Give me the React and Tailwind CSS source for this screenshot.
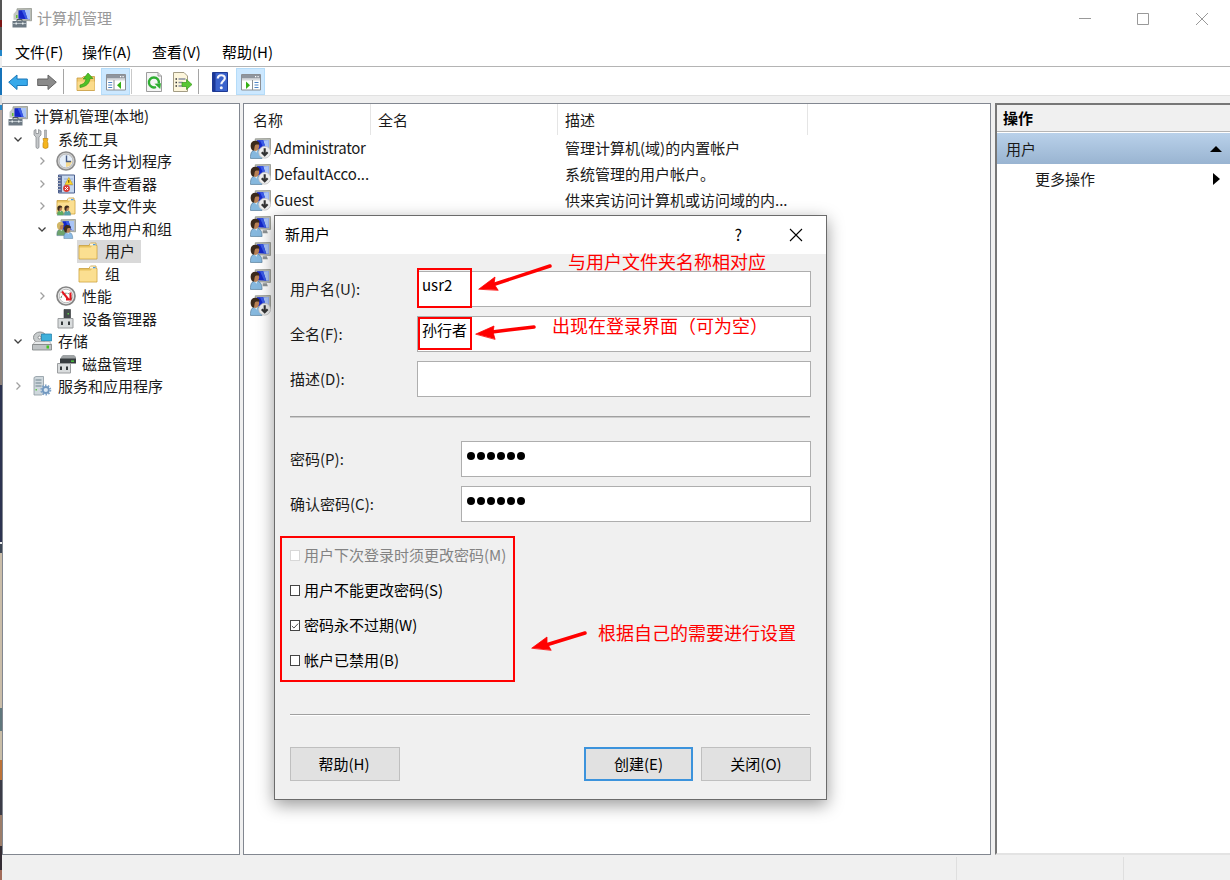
import React from 'react';
import clsx from 'clsx';

const Monitor = () => (
    <>
        <path d="M5 .8 19.500.5v12.300L5 12z" fill="#b9bdb6" stroke="#92958e" strokeWidth=".8" />
        <path d="M6.500 2.200 18 2v9.300L6.500 10.800z" fill="#1527c8" />
        <path d="M12.500 2.100 18 2v9.300l-2.500-.1z" fill="#a9c4f7" />
        <path d="m9.500 2.100 3 0 3 9-2-.1z" fill="#3a5be6" />
    </>
);

const Person = ({ hair = '#3b2a1c', shirt = '#86b8de' }) => (
    <>
        <path d="M.5 19.500c-.3-5 1-8 5-8 4.200 0 6 2.500 6 8z" fill={shirt} stroke="#4c7391" strokeWidth=".6" />
        <path d="M4 11h3.500L6 14z" fill="#e8eef2" />
        <ellipse cx="5.200" cy="7.800" rx="3.500" ry="4.500" fill="#b98155" />
        <path d="M.8 9C0 4.500 2 2.500 5 2.500s4.500 2 4 4C6.500 5.800 5 6.300 4.500 7.500L3.800 12C2 12 1.200 10.500.8 9z" fill={hair} />
    </>
);

const Folder = () => (
    <>
        <path d="M1 4.500h10l1.500-2.500H18v2l1 .5V18H1z" fill="#e8c35f" stroke="#c99f3d" strokeWidth=".8" />
        <path d="M12 2.500h5.500v2H12z" fill="#f8f4e6" />
        <path d="M15 3h2.500v1.200H15z" fill="#4c9be0" />
        <path d="M1.500 6.500h11L14 5h4.500v12.500h-17z" fill="#fbdf91" />
    </>
);

const Panes = ({ flip }) => (
    <>
        <path d="M.5 2.500h19V18H.5z" fill="#fff" stroke="#8c8f94" />
        <path d="M1 3h18v3.500H1z" fill="#8f959e" />
        <path d="M14 4h1.200v1.200H14zM16.500 4h1.200v1.200h-1.200z" fill="#fff" />
        <path d="M1 7h18v1.500H1z" fill="#d6d9dd" />
        {flip ? (
            <>
                <path d="M11.500 8v10" stroke="#8c8f94" />
                <path d="m5 9.500 4 3.700L5 17z" fill="#35b015" />
                <path d="M13.500 10.500h4M13.500 13h4M13.500 15.500h4" stroke="#4f83c4" strokeWidth="1.200" />
            </>
        ) : (
            <>
                <path d="M8 8v10" stroke="#8c8f94" />
                <path d="m15 9.500-4 3.700 4 3.800z" fill="#35b015" />
                <path d="M2.200 10.500h4M2.200 13h4M2.200 15.500h4" stroke="#4f83c4" strokeWidth="1.200" />
            </>
        )}
    </>
);

const icons = {
    computer: (
        <>
            <Monitor />
            <path d="m1.500 6 3-3.500 1.500.3v9H1.500z" fill="#c3c7c3" />
            <path d="M4 7h1.500v3H4z" fill="#64bd35" />
            <path d="M.5 13h14v6.500H.5z" fill="#6d7983" />
            <path d="M5 13v-1.500h5V13" stroke="#4b565e" fill="none" />
            <path d="M.5 15.500h14" stroke="#b6c0c6" />
            <path d="M3.500 14.500h1.500v2H3.500zM10 14.500h1.500v2H10z" fill="#e8edef" />
        </>
    ),
    back: (
        <path d="M.7 10.200 9 3v4h10.300v6.500H9v4z" fill="#37a9ea" stroke="#1b77b8" strokeLinejoin="round" />
    ),
    forward: (
        <path d="M19.300 10.200 11 3v4H.7v6.500H11v4z" fill="#8b8b8b" stroke="#646464" strokeLinejoin="round" />
    ),
    up: (
        <>
            <path d="M1 6h5l1.500-1.500H18.500V18.500H1z" fill="#f3cc72" stroke="#c79b3d" strokeWidth=".8" />
            <path d="M1.500 9.500h17V18h-17z" fill="#fbdb8b" />
            <path d="M4 13c4-1 5.500-3 6-6H7.200L12 1l5 5.500h-3c-.5 4.500-3 8-10 9z" fill="#4fc127" stroke="#2d8d14" strokeWidth=".6" />
        </>
    ),
    tree: <Panes />,
    actions: <Panes flip />,
    refresh: (
        <>
            <path d="M2.500.5h11.500L17.500 4v15.500h-15z" fill="#f4f4f4" stroke="#9d9d9d" />
            <path d="M14 .5V4h3.500" fill="#ddd" stroke="#9d9d9d" />
            <path d="M12 15a5 5 0 1 1 2.800-3.500" fill="none" stroke="#2fae32" strokeWidth="2.400" />
            <path d="m10.500 11.800 6.500-.5-.8 5.700z" fill="#2fae32" />
        </>
    ),
    exportList: (
        <>
            <path d="M1.500.5H12L15.500 4v15.500h-14z" fill="#fdf6dc" stroke="#a39c84" />
            <path d="M3.500 7h1.500M3.500 10.500h1.500M3.500 14h1.500" stroke="#333" strokeWidth="1.500" />
            <path d="M6.500 7h7M6.500 10.500h4M6.500 14h4" stroke="#888fa0" strokeWidth="1.300" />
            <path d="M10 10.500h4.500v-3L20 12.500l-5.500 5v-3H10z" fill="#58c832" stroke="#36971b" strokeWidth=".7" />
        </>
    ),
    help: (
        <>
            <path d="M2.500.5h15v19h-15z" fill="#3a62cc" stroke="#1d3994" />
            <path d="M3 1h2.500v18H3z" fill="#1b3796" />
            <path d="M7.800 6.500c0-4.300 7-4.300 7-.3 0 2.800-3.500 2.800-3.500 6" fill="none" stroke="#f4f4fa" strokeWidth="2.200" />
            <circle cx="11.300" cy="15.700" r="1.500" fill="#f4f4fa" />
        </>
    ),
    tools: (
        <>
            <path d="M4 8 2 6V1.500L4 .5v4h2.500v-4L9 2v4L7 8v10.500q-1.500 2-3 0z" fill="#c5c8ca" stroke="#7e8386" strokeWidth=".7" />
            <path d="M12.500 1h2v9h-2z" fill="#b7b9bb" stroke="#808487" strokeWidth=".5" />
            <path d="M11 9.500h5l-.7 3 .7 2v4q-2.500 2-5 0v-4l.7-2z" fill="#f5b51e" stroke="#c28713" strokeWidth=".7" />
        </>
    ),
    clock: (
        <>
            <circle cx="10" cy="10" r="9" fill="#d9d9d9" stroke="#8c8c8c" strokeWidth="1.600" />
            <circle cx="10" cy="10" r="7" fill="#e6eff9" stroke="#b5b5b5" />
            <path d="M10 10h6a6 6 0 0 1-6 6z" fill="#f4d88f" />
            <path d="M10.500 4.500V10.500H15" fill="none" stroke="#455a85" strokeWidth="1.400" />
        </>
    ),
    events: (
        <>
            <path d="M2.500 1h16v18h-16z" fill="#c7d8ef" stroke="#4b5e8c" />
            <path d="M3 1.500h3v17H3z" fill="#5b6b96" />
            <path d="M1.500 3.500h3M1.500 6.500h3M1.500 9.500h3M1.500 12.500h3M1.500 15.500h3" stroke="#b8bdc8" />
            <path d="M8 5h9M8 8h9M8 11h9" stroke="#8ea7d4" strokeWidth=".8" />
            <path d="m12.800 3.500 4 7H9z" fill="#ffd72b" stroke="#c59a15" strokeWidth=".6" />
            <path d="M12.800 6v2.800" stroke="#4c3b00" />
            <circle cx="10.500" cy="14.500" r="3.400" fill="#db3b34" />
            <path d="m9 13 3 3m0-3-3 3" stroke="#fff" />
        </>
    ),
    shared: (
        <>
            <Folder />
            <g transform="translate(1 8) scale(.58)"><Person shirt="#5fae5c" /></g>
            <g transform="translate(8 8) scale(.58)"><Person shirt="#55a3a6" /></g>
        </>
    ),
    users: (
        <>
            <Monitor />
            <g transform="translate(.5 1) scale(.8)"><Person hair="#d2b767" shirt="#6ea46c" /></g>
            <g transform="translate(7.500 4) scale(.8)"><Person shirt="#8dbce6" /></g>
        </>
    ),
    folder: <Folder />,
    perf: (
        <>
            <circle cx="10" cy="10" r="9" fill="#eee" stroke="#858585" strokeWidth="1.700" />
            <circle cx="10" cy="10" r="6.800" fill="#fff" stroke="#bcbcbc" />
            <path d="M5 12a5.500 5.500 0 0 1 10.500-1.500V14" fill="none" stroke="#59846b" strokeDasharray="2 1" />
            <path d="m6 5.500 6.500 8M14.500 6.500V13.500H10" fill="none" stroke="#e11820" strokeWidth="2" />
        </>
    ),
    device: (
        <>
            <path d="M8 .5h6.500V11H8z" fill="#454a4d" stroke="#2d3032" strokeWidth=".6" />
            <path d="M11.500 4h1.500v1.500h-1.500z" fill="#5ec94b" />
            <path d="M2 9.500h15v9.500H2z" fill="#d9dcdd" stroke="#9a9d9f" />
            <path d="M5 12.500h2v3.500H5zM12 12.500h2v3.500h-2z" fill="#33373a" />
        </>
    ),
    storage: (
        <>
            <ellipse cx="8" cy="6.500" rx="6.500" ry="5.500" fill="#c8cccd" stroke="#8a8e90" />
            <circle cx="7.500" cy="6.500" r="1.500" fill="#fff" stroke="#8a8e90" />
            <path d="M9.500 3h10v7h-10z" fill="#3fb0da" stroke="#1d7da9" strokeWidth=".7" />
            <path d="m3 10.500-2 3h18.500l-2-3z" fill="#e8eaeb" stroke="#999" strokeWidth=".6" />
            <path d="M.5 13.500h19v5.500H.5z" fill="#bfc3c5" stroke="#7b8082" strokeWidth=".8" />
            <path d="M14.500 14.500h2.500v3h-2.500z" fill="#43c51f" />
        </>
    ),
    disk: (
        <>
            <path d="m5 3 2-2h11l2 2v5H4z" fill="#9fa3a5" />
            <path d="M4 4.500h16v5H4z" fill="#373c3f" />
            <path d="M15 6.500h3v1.300h-3z" fill="#4bd73a" />
            <path d="M1.500 9.500h13v9.500h-13z" fill="#d9dcdd" stroke="#9a9d9f" />
            <path d="M4 12.500h2v3.500H4zM10 12.500h2v3.500h-2z" fill="#33373a" />
        </>
    ),
    services: (
        <>
            <path d="M2 1.500 4 .5h7.500v17L9.500 19H2z" fill="#cfd8dd" stroke="#8b989f" strokeWidth=".8" />
            <path d="M3.500 4h6M3.500 7h6M3.500 10h6" stroke="#71848f" strokeWidth="1.200" />
            <path d="M3.500 13h1.500v1.500H3.500z" fill="#5fc648" />
            <circle cx="13.800" cy="14" r="4.600" fill="none" stroke="#7fa3c8" strokeWidth="1.800" strokeDasharray="1.600 1.290" />
            <circle cx="13.800" cy="14" r="3" fill="#dae8f4" stroke="#7298c0" strokeWidth="1.800" />
        </>
    ),
    user: (
        <>
            <Monitor />
            <path d="M12 13.500h4l1 3h-5z" fill="#8e9395" />
            <Person />
        </>
    ),
    userOff: (
        <>
            <Monitor />
            <Person />
            <circle cx="14" cy="13.500" r="5.700" fill="#ededed" stroke="#bdbdbd" strokeWidth=".7" />
            <path d="M14 9.800v6.500M11.200 13.500l2.800 3 2.800-3" fill="none" stroke="#333" strokeWidth="2" />
        </>
    ),
};

const Icon = ({ name, className }) => (
    <svg viewBox="0 0 20 20" className={clsx('h-5 w-5 shrink-0', className)}>{icons[name]}</svg>
);

const menus = [
    { label: '文件(F)', width: 'w-[67px]' },
    { label: '操作(A)', width: 'w-[70px]' },
    { label: '查看(V)', width: 'w-[70px]' },
    { label: '帮助(H)', width: 'w-[70px]' },
];

const tree = [
    { label: '系统工具', icon: 'tools', indent: 'pl-[8px]', arrow: 'open' },
    { label: '任务计划程序', icon: 'clock', indent: 'pl-[32px]', arrow: 'closed' },
    { label: '事件查看器', icon: 'events', indent: 'pl-[32px]', arrow: 'closed' },
    { label: '共享文件夹', icon: 'shared', indent: 'pl-[32px]', arrow: 'closed' },
    { label: '本地用户和组', icon: 'users', indent: 'pl-[32px]', arrow: 'open' },
    { label: '用户', icon: 'folder', indent: 'pl-[57px]', selected: true },
    { label: '组', icon: 'folder', indent: 'pl-[57px]' },
    { label: '性能', icon: 'perf', indent: 'pl-[32px]', arrow: 'closed' },
    { label: '设备管理器', icon: 'device', indent: 'pl-[32px]' },
    { label: '存储', icon: 'storage', indent: 'pl-[8px]', arrow: 'open' },
    { label: '磁盘管理', icon: 'disk', indent: 'pl-[32px]' },
    { label: '服务和应用程序', icon: 'services', indent: 'pl-[8px]', arrow: 'closed' },
];

const accounts = [
    { name: 'Administrator', desc: '管理计算机(域)的内置帐户', icon: 'userOff' },
    { name: 'DefaultAcco...', desc: '系统管理的用户帐户。', icon: 'userOff' },
    { name: 'Guest', desc: '供来宾访问计算机或访问域的内...', icon: 'userOff' },
    { name: '', desc: '', icon: 'user' },
    { name: '', desc: '', icon: 'user' },
    { name: '', desc: '', icon: 'user' },
    { name: '', desc: '', icon: 'userOff' },
];

const checks = [
    { label: '用户下次登录时须更改密码(M)', disabled: true },
    { label: '用户不能更改密码(S)' },
    { label: '密码永不过期(W)', checked: true },
    { label: '帐户已禁用(B)' },
];

const Separator = () => <div className="w-px self-stretch bg-[#a5a5a5]" />;

const TitleBar = () => (
    <header className="flex h-9 items-center pl-[10px]">
        <Icon name="computer" />
        <span className="ml-[5px] text-[#999]">计算机管理</span>
        <svg className="ml-auto h-9 w-[174px]" viewBox="0 0 174 36" fill="none" stroke="#999">
            <path d="M23 18.500h12" />
            <path d="M81.500 13.500h11v11h-11z" />
            <path d="m140 13 12 12m0-12-12 12" />
        </svg>
    </header>
);

const Toolbar = () => (
    <div className="flex h-[30px] items-center border-t border-b border-t-[#b4b4b4] border-b-[#e1e1e1] pt-px pl-[6px]">
        <Icon name="back" />
        <Icon name="forward" className="ml-[9px]" />
        <div className="ml-[6px] flex h-[25px]"><Separator /></div>
        <Icon name="up" className="ml-[12px] h-[20px]" />
        <div className="ml-[5px] flex h-[27px] w-[29px] items-center justify-center border border-[#b5dcf9] bg-[#cce8ff]">
            <Icon name="tree" />
        </div>
        <div className="ml-px flex h-[25px] opacity-60"><Separator /></div>
        <Icon name="refresh" className="ml-[12px]" />
        <Icon name="exportList" className="ml-2" />
        <div className="ml-[6px] flex h-[25px]"><Separator /></div>
        <Icon name="help" className="ml-[11px]" />
        <div className="ml-[6px] flex h-[27px] w-[29px] items-center justify-center border border-[#b5dcf9] bg-[#cce8ff]">
            <Icon name="actions" />
        </div>
    </div>
);

const Arrow = ({ state }) => (
    <svg viewBox="0 0 14 14" className="h-[14px] w-[14px] shrink-0" fill="none" strokeWidth="1.300">
        {state === 'open' && <path d="m3.500 5.500 3.500 3.500 3.500-3.500" stroke="#404040" />}
        {state === 'closed' && <path d="m5.500 3.500 3.500 3.500-3.500 3.500" stroke="#a0a0a0" />}
    </svg>
);

const Tree = () => (
    <nav className="w-[238px] border border-[#828790] bg-white pt-px">
        <div className="flex h-[22.500px] items-center pl-[5px]">
            <Icon name="computer" />
            <span className="ml-[6px]">计算机管理(本地)</span>
        </div>
        {tree.map((node) => (
            <div key={node.label} className={clsx('flex h-[22.500px] items-center', node.indent)}>
                <Arrow state={node.arrow} />
                <div
                    className={clsx(
                        'flex h-[22.500px] items-center',
                        node.selected && 'ml-[3px] bg-[#d9d9d9] pr-[6px]',
                        node.label === '组' && 'ml-[3px]'
                    )}
                >
                    <Icon name={node.icon} className={node.icon === 'folder' ? 'ml-px' : 'ml-[7px]'} />
                    <span className={node.icon === 'folder' ? 'ml-[7px]' : 'ml-[6px]'}>{node.label}</span>
                </div>
            </div>
        ))}
    </nav>
);

const UserList = () => (
    <main className="ml-[3px] w-[748px] border border-[#828790] bg-white">
        <div className="flex h-[31px]">
            <div className="w-[127px] border-r border-[#e5e5e5] pt-[5px] pl-[9px]">名称</div>
            <div className="w-[187px] border-r border-[#e5e5e5] pt-[5px] pl-[7px]">全名</div>
            <div className="w-[250px] border-r border-[#e5e5e5] pt-[5px] pl-[7px]">描述</div>
        </div>
        {accounts.map((account, i) => (
            <div key={i} className="flex h-[26.200px] items-center pl-[6px]">
                <Icon name={account.icon} className="h-[21px] w-[21px]" />
                <span className={clsx('ml-[3px] w-[291px]', account.name === 'Administrator' ? 'tracking-[-0.35px]' : 'tracking-[-0.05px]')}>
                    {account.name}
                </span>
                <span>{account.desc}</span>
            </div>
        ))}
    </main>
);

const ActionsPane = () => (
    <aside className="ml-[4px] flex-1 border-t-2 border-b-2 border-l-2 border-t-[#777] border-b-[#e3e3e3] border-l-[#777] bg-white">
        <div className="flex h-[27px] items-center border-b border-[#b5b5b5] bg-[#f0f0f0] pl-[6px] font-bold text-black">操作</div>
        <div className="mt-px flex h-[31px] items-center justify-between bg-linear-to-b from-[#b9d1ea] to-[#99b4d1] pr-[8px] pl-[9px]">
            <span>用户</span>
            <svg viewBox="0 0 12 6" className="h-[6px] w-3"><path d="M6 0 12 6H0z" /></svg>
        </div>
        <div className="flex h-[30px] items-center justify-between pr-[10px] pl-[38px]">
            <span>更多操作</span>
            <svg viewBox="0 0 7 12" className="h-3 w-[7px]"><path d="M0 0 7 6 0 12z" /></svg>
        </div>
    </aside>
);

const Field = ({ label, value, secret }) => (
    <div className="flex h-9">
        <label className={clsx('pt-[7px]', secret ? 'w-[171px]' : 'w-[127px]')}>{label}</label>
        <div className={clsx('flex-1 border border-[#aeaeae] bg-white text-black', secret ? 'px-[5px]' : 'pt-[2px] pl-[4px]')}>
            {secret ? (
                <div className="flex gap-[2px] pt-[10px]">
                    {[...Array(6)].map((_, i) => (
                        <span key={i} className="h-2 w-2 rounded-full bg-black" />
                    ))}
                </div>
            ) : value}
        </div>
    </div>
);

const NewUserDialog = () => (
    <section className="absolute top-[215px] left-[274px] flex h-[585px] w-[553px] flex-col border border-[#6b6b6b] bg-[#f0f0f0] shadow-[0_5px_16px_rgba(0,0,0,0.4)]">
        <div className="flex h-[38px] items-center bg-white pr-[23px] pl-[10px] text-black">
            <span className="pb-[2px]">新用户</span>
            <span className="ml-auto mr-[47px] pb-[2px] text-base">?</span>
            <svg viewBox="0 0 14 14" className="h-[14px] w-[14px]" stroke="#000" strokeWidth="1.100"><path d="m1 1 12 12M13 1 1 13" /></svg>
        </div>
        <div className="flex flex-1 flex-col pt-[17px] pr-[15px] pl-[15px]">
            <div className="flex flex-col gap-[9px]">
                <Field label="用户名(U):" value="usr2" />
                <Field label="全名(F):" value="孙行者" />
                <Field label="描述(D):" value="" />
            </div>
            <div className="mt-[19px] mr-px h-[2px] border-t border-b border-t-[#a0a0a0] border-b-[#ccc]" />
            <div className="mt-[23px] flex flex-col gap-[9px]">
                <Field label="密码(P):" secret />
                <Field label="确认密码(C):" secret />
            </div>
            <div className="mt-[16px]">
                {checks.map((item) => (
                    <div key={item.label} className={clsx('flex h-[35px] items-center', item.disabled ? 'text-[#838383]' : 'text-black')}>
                        <span className={clsx('flex h-[11px] w-[10px] items-center justify-center border bg-white', item.disabled ? 'border-[#d8d8d8]' : 'border-[#444]')}>
                            {item.checked && (
                                <svg viewBox="0 0 9 9" className="h-[8px] w-[8px]" fill="none" stroke="#333"><path d="m1 4.500 2.300 2.300L8 1.800" /></svg>
                            )}
                        </span>
                        <span className="ml-[4px] pb-[2px]">{item.label}</span>
                    </div>
                ))}
            </div>
            <div className="mt-[36px] mr-px h-[2px] border-t border-b border-t-[#a0a0a0] border-b-white" />
            <div className="mt-[31px] flex h-[34px] gap-2 text-black">
                <button className="mr-auto w-[110px] border border-[#bfbfbf] bg-[#e1e1e1] pr-[2px]">帮助(H)</button>
                <button className="w-[109px] border-2 border-[#3c93dc] bg-[#e1e1e1]">创建(E)</button>
                <button className="w-[110px] border border-[#bfbfbf] bg-[#e1e1e1]">关闭(O)</button>
            </div>
        </div>
    </section>
);

const Annotations = () => (
    <>
        <div className="absolute top-[268px] left-[417px] h-[40px] w-[55px] border-2 border-[#ff0000]" />
        <div className="absolute top-[317px] left-[418px] h-[33px] w-[54px] border-2 border-[#ff0000]" />
        <div className="absolute top-[536px] left-[280px] h-[146px] w-[235px] border-2 border-[#ff0000]" />
        <svg className="absolute top-[255px] left-[470px] h-[400px] w-[130px]" viewBox="470 255 130 400" fill="#f00" stroke="#f00" strokeLinecap="round">
            <path d="M550 266 492 285M534 327l-42 5M585 633l-39 12" strokeWidth="3.500" />
            <path d="m479 289 16-12-1 7 4 6zM476 334l18-8-1 6 2 7zM532 648l15-11v6l4 7z" strokeWidth=".8" />
        </svg>
        <p className="absolute top-[250px] left-[568px] text-[18px] whitespace-nowrap text-[#ff0000]">与用户文件夹名称相对应</p>
        <p className="absolute top-[314px] left-[552px] text-[18px] whitespace-nowrap text-[#ff0000]">出现在登录界面（可为空）</p>
        <p className="absolute top-[621px] left-[598px] text-[18px] whitespace-nowrap text-[#ff0000]">根据自己的需要进行设置</p>
    </>
);

const App = () => {
    return (
        <div className="relative flex h-[880px] w-[1230px] overflow-hidden bg-white font-['Noto_Sans_CJK_SC',sans-serif] text-[15px] leading-[22px] text-[#1a1a1a]">
            {/* Sliver of the desktop behind the window */}
            <div className="w-[2px] bg-[linear-gradient(#555_0_20px,#7b1616_20px_27px,#555_27px_50px,#2386c8_50px_56px,#eee_56px_68px,#1673b9_68px_95px,#ddd_95px_105px,#2386c8_105px_110px,#b6a69e_110px_240px,#8d8179_240px_385px,#2d3350_385px_542px,#eee_542px_544px,#3d4654_544px_553px,#cabda9_553px_708px,#60777c_708px_731px,#c9bda7_731px_760px,#bd7338_760px_780px,#3c3c47_780px_815px,#9c7d69_815px_846px,#342d34_846px_870px,#a16c5a_870px)]" />
            <div className="flex flex-1 flex-col">
                <TitleBar />
                <div className="flex h-[30px] items-center pt-px pl-[13px]">
                    {menus.map((menu) => (
                        <span key={menu.label} className={clsx('text-black', menu.width)}>{menu.label}</span>
                    ))}
                </div>
                <Toolbar />
                <div className="flex h-[759px] bg-[#f0f0f0] pt-[7px]">
                    <Tree />
                    <UserList />
                    <ActionsPane />
                </div>
                <footer className="flex flex-1 bg-[#f0f0f0] pt-[2px]">
                    <div className="w-[955px] border-r border-[#dfdfdf]" />
                    <div className="w-[167px] border-r border-[#dfdfdf]" />
                </footer>
            </div>
            <NewUserDialog />
            <Annotations />
        </div>
    );
};

export default App;
